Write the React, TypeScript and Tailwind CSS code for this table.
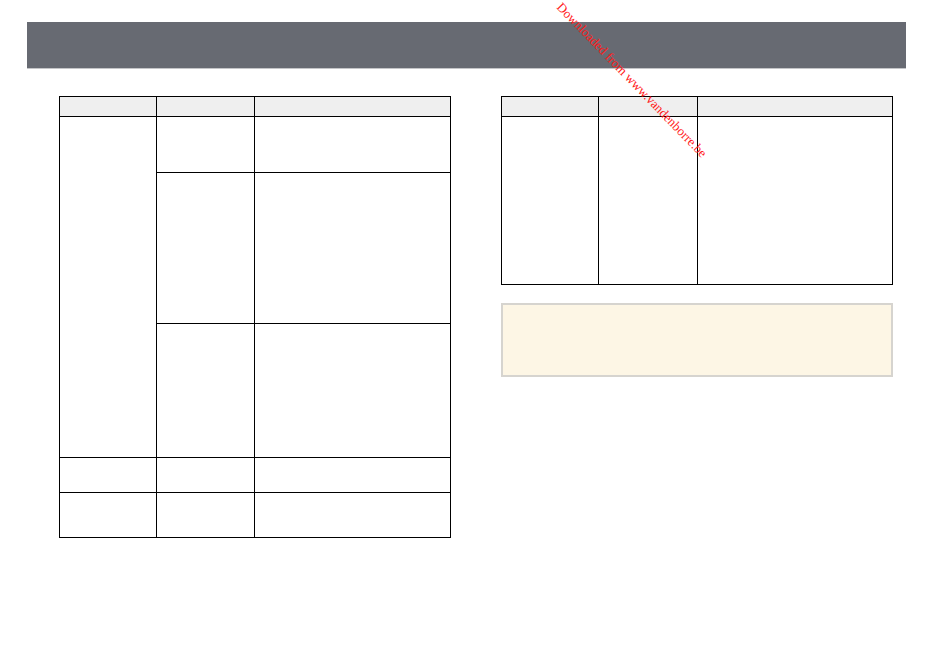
export default function App() {
  const cell = "border border-black p-0";
  return (
    <div className="relative w-[950px] h-[671px] bg-white overflow-hidden" style={{ fontFamily: "'Liberation Serif', serif" }}>
      <div className="pt-[22px] pl-[27px]">
        <div className="w-[879px] h-[47px] bg-[#676a72] border-b border-[#c4c5c8]" />
      </div>

      <div className="flex gap-[50px] pl-[59px] pt-[27px]">
        {/* left table */}
        <table className="w-[392px] border-collapse table-fixed">
          <colgroup>
            <col className="w-[97px]" />
            <col className="w-[98px]" />
            <col />
          </colgroup>
          <thead>
            <tr className="h-[20px] bg-[#efefef]">
              <th className={cell} />
              <th className={cell} />
              <th className={cell} />
            </tr>
          </thead>
          <tbody>
            <tr className="h-[56px]">
              <td className={cell} rowSpan={3} />
              <td className={cell} />
              <td className={cell} />
            </tr>
            <tr className="h-[151px]">
              <td className={cell} />
              <td className={cell} />
            </tr>
            <tr className="h-[134px]">
              <td className={cell} />
              <td className={cell} />
            </tr>
            <tr className="h-[35px]">
              <td className={cell} />
              <td className={cell} />
              <td className={cell} />
            </tr>
            <tr className="h-[45px]">
              <td className={cell} />
              <td className={cell} />
              <td className={cell} />
            </tr>
          </tbody>
        </table>

        {/* right column */}
        <div className="w-[392px] flex flex-col gap-[18px]">
          <table className="w-full border-collapse table-fixed">
            <colgroup>
              <col className="w-[97px]" />
              <col className="w-[99px]" />
              <col />
            </colgroup>
            <thead>
              <tr className="h-[20px] bg-[#efefef]">
                <th className={cell} />
                <th className={cell} />
                <th className={cell} />
              </tr>
            </thead>
            <tbody>
              <tr className="h-[168px]">
                <td className={cell} />
                <td className={cell} />
                <td className={cell} />
              </tr>
            </tbody>
          </table>
          <div className="h-[74px] bg-[#fdf6e5] border-2 border-[#d6d4cf]" />
        </div>
      </div>

      <div
        className="absolute left-[564px] top-[0px] origin-top-left rotate-[46deg] whitespace-nowrap text-[13px] leading-none text-[#ff1a1a]"
      >
        Downloaded from www.vandenborre.be
      </div>
    </div>
  );
}
